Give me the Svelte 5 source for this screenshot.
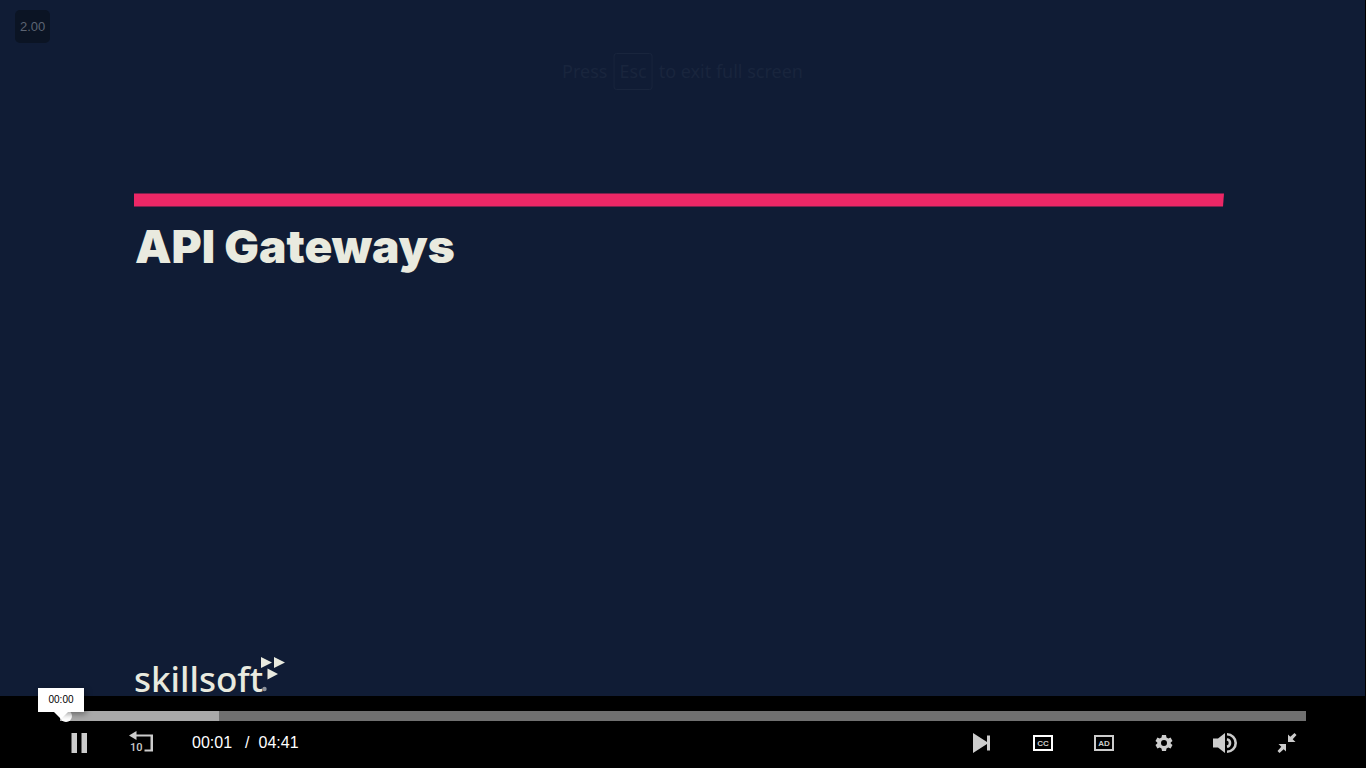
<script>
  const lesson = { title: 'API Gateways', brand: 'skillsoft' };
  const speed = '2.00';
  const elapsed = '00:01';
  const duration = '04:41';
  const preview = '00:00';
  let buffered = $state(12.8);
  let position = $state(0);
</script>

<main class="player">
  <section class="stage" aria-label="Video">
    <div class="speed">{speed}</div>
    <div class="notice">Press <kbd>Esc</kbd> to exit full screen</div>
    <div class="slide">
      <svg class="rule" viewBox="0 0 1090 14" preserveAspectRatio="none" aria-hidden="true">
        <path d="M0 .5H1090L1089 13.5H0Z" fill="#ec2766" />
      </svg>
      <h1>{lesson.title}</h1>
      <div class="brand">
        <span>{lesson.brand}</span>
        <svg width="26" height="38" viewBox="0 0 26 38" aria-hidden="true">
          <path d="M-2 3 9 8.500-2 14ZM11 3 22 8.500 11 14ZM4.500 14.500 15 20 4.500 25.500Z" fill="#e9eadf" />
          <circle cx="1.500" cy="35" r="2.200" fill="#8b919a" />
        </svg>
      </div>
    </div>
  </section>

  <footer class="bar">
    <div class="seek">
      <div class="loaded" style="width: {buffered}%"></div>
      <input type="range" min="0" max="281" bind:value={position} aria-label="Seek" />
      <output class="tip">{preview}</output>
    </div>
    <div class="controls">
      <div class="group left">
        <button aria-label="Pause">
          <svg width="16" height="20" viewBox="0 0 16 20"><path d="M.5 0H6V20H.5ZM10.500 0H16V20H10.500Z" /></svg>
        </button>
        <button aria-label="Rewind 10 seconds">
          <svg width="26" height="24" viewBox="0 0 26 24">
            <path d="M1 4.500 8.500 0V3.500H25V20.500H16.500V18.500H22.500V5.500H8.500V9Z" />
            <text class="ten" x="2" y="20">10</text>
          </svg>
        </button>
        <div class="time"><span>{elapsed}</span><span class="slash">/</span><span>{duration}</span></div>
      </div>
      <div class="group right">
        <button aria-label="Next">
          <svg width="18" height="20" viewBox="0 0 18 20"><path d="M0 0 14 9V2.500H17V17.500H14V11L0 20Z" /></svg>
        </button>
        <button class="active" aria-label="Closed captions" aria-pressed="true">
          <svg width="20" height="16" viewBox="0 0 20 16">
            <rect x="1" y="1" width="18" height="14" fill="none" stroke="currentColor" stroke-width="2" />
            <text class="tag" x="10" y="11">CC</text>
          </svg>
        </button>
        <button aria-label="Audio description">
          <svg width="20" height="16" viewBox="0 0 20 16">
            <rect x="1" y="1" width="18" height="14" fill="none" stroke="currentColor" stroke-width="2" />
            <text class="tag" x="10" y="11">AD</text>
          </svg>
        </button>
        <button aria-label="Settings">
          <svg width="18" height="18" viewBox="0 0 18 18">
            <path fill-rule="evenodd" d="M6 1H10L10.500 3.400 12.300 4.400 14.600 3.600 16.500 7 14.700 8.500V9.500L16.500 11 14.600 14.400 12.300 13.600 10.500 14.600 10 17H6L5.500 14.600 3.700 13.600 1.400 14.400-.5 11 1.300 9.500V8.500L-.5 7 1.400 3.600 3.700 4.400 5.500 3.400ZM8 6A3 3 0 1 0 8 12 3 3 0 1 0 8 6Z" />
          </svg>
        </button>
        <button aria-label="Volume">
          <svg width="26" height="22" viewBox="0 0 26 22">
            <path d="M0 6.500H5L12 1V21L5 15.500H0Z" />
            <path d="M14 2.300A8.700 8.700 0 0 1 14 19.700M14 7.200A3.900 3.900 0 0 1 14 14.800" fill="none" stroke="currentColor" stroke-width="2.600" />
          </svg>
        </button>
        <button aria-label="Exit full screen">
          <svg width="20" height="20" viewBox="0 0 20 20">
            <path d="M11 9V1.500L13.300 3.800 17.500 0 19.500 2 15.700 6.200 18.500 9ZM9 11V18.500L6.700 16.200 2.500 20 .5 18 4.300 13.800 1.500 11Z" />
          </svg>
        </button>
      </div>
    </div>
  </footer>
</main>

<style>
  :global(body) { margin: 0; background: #000; }
  .player {
    min-height: 100vh;
    display: flex;
    flex-direction: column;
    background: #000;
    font-family: "Liberation Sans", Arial, sans-serif;
  }
  .stage {
    position: relative;
    flex: 1;
    display: flex;
    margin-right: 1px;
    background: #101c35;
  }
  .speed {
    position: absolute;
    top: 10px;
    left: 15px;
    padding: 0 5px;
    border-radius: 5px;
    background: #0b1424;
    color: #5c6473;
    font-size: 13px;
    line-height: 33px;
  }
  .notice {
    position: absolute;
    top: 53px;
    left: 50%;
    transform: translateX(-50%);
    display: flex;
    align-items: center;
    gap: 6px;
    white-space: nowrap;
    color: #19253d;
    font: 18px/35px "Noto Sans", sans-serif;
  }
  kbd {
    padding: 0 5px;
    border: 1px solid #19253d;
    border-radius: 3px;
    font: inherit;
  }
  .slide {
    flex: 1;
    display: flex;
    flex-direction: column;
    padding: 193px 141px 0 134px;
    color: #e9eadf;
  }
  .rule { display: block; width: 100%; height: 14px; }
  h1 {
    margin: 12px 0 0 1px;
    font: 900 46px/54px Inter, sans-serif;
  }
  .brand {
    display: flex;
    align-items: flex-end;
    margin-top: auto;
    height: 42px;
    font: 500 35px/34px "Noto Sans", sans-serif;
  }
  .brand svg { align-self: flex-start; overflow: visible; }
  .bar { padding: 15px 60px 0; }
  .seek { position: relative; height: 10px; background: #707070; }
  .loaded { height: 100%; background: #a9a9a9; }
  .seek input {
    position: absolute;
    inset: 0;
    width: 100%;
    height: 10px;
    margin: 0;
    appearance: none;
    background: none;
  }
  .seek input::-webkit-slider-thumb {
    appearance: none;
    width: 12px;
    height: 12px;
    border-radius: 50%;
    background: #fff;
  }
  .tip {
    position: absolute;
    left: -22px;
    bottom: 9px;
    width: 46px;
    background: #fff;
    color: #000;
    font-size: 10px;
    line-height: 24px;
    text-align: center;
    box-shadow: 2px 2px 6px #0006;
  }
  .tip::after {
    content: "";
    position: absolute;
    top: 100%;
    left: 16px;
    border: 7px solid transparent;
    border-top-color: #fff;
    border-bottom: 0;
  }
  .controls, .group { display: flex; align-items: center; }
  .controls { justify-content: space-between; height: 44px; padding-bottom: 3px; }
  .left { gap: 24px; }
  .right { gap: 23px; }
  button {
    display: grid;
    place-items: center;
    width: 38px;
    height: 38px;
    padding: 0;
    border: 0;
    background: none;
    color: #ccc;
    font-family: inherit;
    cursor: pointer;
  }
  button svg { fill: currentColor; overflow: visible; }
  .ten { font: 500 11px Roboto, sans-serif; }
  .tag { font-size: 8px; font-weight: 700; text-anchor: middle; fill: #ccc; }
  .active { color: #fff; }
  .time {
    display: flex;
    gap: 9px;
    margin-left: 8px;
    color: #fff;
    font-size: 16px;
    line-height: 20px;
  }
  .slash { margin-left: 4px; }
</style>
